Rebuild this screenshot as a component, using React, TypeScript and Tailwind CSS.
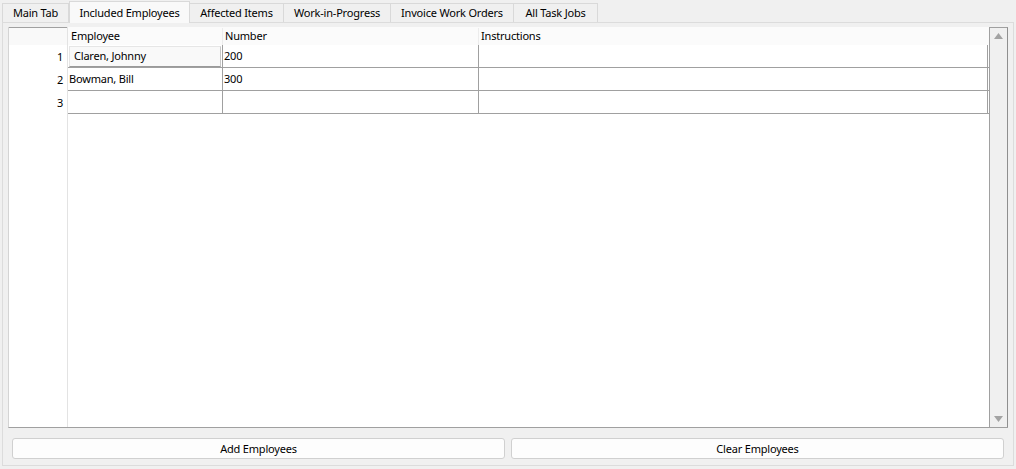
const tabs = [
  { label: 'Main Tab', w: 67 },
  { label: 'Included Employees', w: 121 },
  { label: 'Affected Items', w: 95 },
  { label: 'Work-in-Progress', w: 108 },
  { label: 'Invoice Work Orders', w: 124 },
  { label: 'All Task Jobs', w: 85 },
];

const rows = [
  { n: 1, employee: 'Claren, Johnny', number: '200', editing: true },
  { n: 2, employee: 'Bowman, Bill', number: '300', editing: false },
  { n: 3, employee: '', number: '', editing: false },
];

function Tab({ label, w, active }: { label: string; w: number; active: boolean }) {
  if (active) {
    return (
      <div
        style={{ width: w }}
        className="relative z-10 -mb-px flex h-[22px] items-center justify-center border border-b-0 border-[#d9d9d9] bg-[#f9f9f9] pt-[1px]"
      >
        {label}
      </div>
    );
  }
  return (
    <div
      style={{ width: w }}
      className="-ml-px flex h-[19px] items-center justify-center border border-b-0 border-[#d9d9d9] bg-[#f0f0f0] first:ml-0"
    >
      {label}
    </div>
  );
}

export default function App() {
  return (
    <div
      className="flex h-[469px] w-[1016px] flex-col bg-[#f0f0f0] text-[11px] tracking-[-0.2px] text-black"
      style={{ fontFamily: '"Segoe UI", "Noto Sans", sans-serif' }}
    >
      {/* Tab bar */}
      <div className="flex items-end pl-[2px] pt-[1px]">
        {tabs.map((t, i) => (
          <Tab key={t.label} label={t.label} w={t.w} active={i === 1} />
        ))}
      </div>

      {/* Tab pane */}
      <div className="mx-[2px] mb-[3px] flex flex-1 flex-col border border-[#dcdcdc] bg-[#f0f0f0] px-[5px] pt-[4px]">
        {/* Table frame */}
        <div className="flex h-[401px] border-b border-l border-[#a0a0a0] border-l-[#d4d4d4] bg-white">
          {/* vertical header */}
          <div className="flex w-[59px] flex-col border-r border-[#e3e3e3]">
            <div className="h-[18px] border-t border-[#a0a0a0] bg-[#f9f9f9]" />
            {rows.map((r) => (
              <div key={r.n} className="flex h-[23px] items-center justify-end pr-[4px] pt-[1px]">
                {r.n}
              </div>
            ))}
          </div>

          {/* cells */}
          <div className="flex flex-1 flex-col">
            <div className="flex h-[18px] bg-[#fbfbfb] pt-[1px]">
              <div className="flex w-[155px] items-center border-r border-[#ececec] pl-[3px]">Employee</div>
              <div className="flex w-[256px] items-center border-r border-[#ececec] pl-[2px]">Number</div>
              <div className="flex w-[509px] items-center pl-[2px]">Instructions</div>
            </div>
            {rows.map((r) => (
              <div key={r.n} className="flex h-[23px] border-b border-[#a0a0a0]">
                <div className="flex w-[155px] items-center border-r border-[#a0a0a0]">
                  {r.editing ? (
                    <div className="mx-[1px] flex h-[21px] w-full items-center border border-[#e6e6e6] border-b-[#9a9a9a] border-r-[#c8c8c8] bg-[#f9f9f9] pl-[4px] pt-[1px]">
                      {r.employee}
                    </div>
                  ) : (
                    <span className="pl-[1px] pt-[1px]">{r.employee}</span>
                  )}
                </div>
                <div className="flex w-[256px] items-center border-r border-[#a0a0a0] pl-[1px] pt-[1px]">{r.number}</div>
                <div className="flex w-[509px] items-center border-r border-[#a0a0a0]" />
              </div>
            ))}
          </div>

          {/* scrollbar */}
          <div className="flex w-[19px] flex-col items-center justify-between border-r border-t border-l border-[#a0a0a0] border-r-[#8f8f8f] bg-[#f0f0f0] py-[5px]">
            <svg width="9" height="6" viewBox="0 0 9 6">
              <path d="M4.5 0L9 6H0z" fill="#a3a3a3" />
            </svg>
            <svg width="9" height="6" viewBox="0 0 9 6">
              <path d="M0 0H9L4.5 6z" fill="#a3a3a3" />
            </svg>
          </div>
        </div>

        {/* buttons */}
        <div className="flex gap-[6px] px-[4px] pt-[10px]">
          <button className="flex h-[21px] flex-1 items-center justify-center rounded-[3px] border border-[#d0d0d0] bg-[#fdfdfd] pt-[1px]">
            Add Employees
          </button>
          <button className="flex h-[21px] flex-1 items-center justify-center rounded-[3px] border border-[#d0d0d0] bg-[#fdfdfd] pt-[1px]">
            Clear Employees
          </button>
        </div>
      </div>
    </div>
  );
}
